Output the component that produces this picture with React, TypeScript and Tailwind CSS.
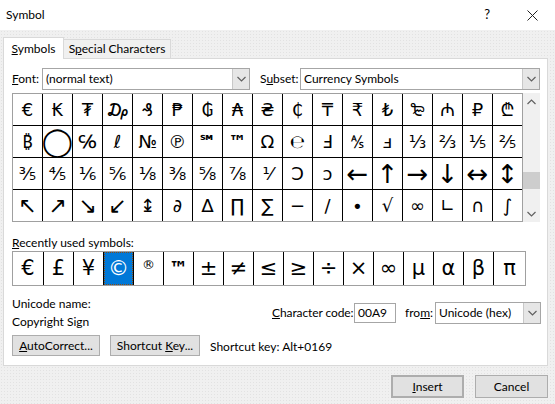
import React from 'react';

const gridRows: string[][] = [
  ['€', '₭', '₮', '₯', '₰', '₱', '₲', '₳', '₴', '₵', '₸', '₹', '₺', '₻', '₼', '₽', '₾'],
  ['₿', '◯', '℅', 'ℓ', '№', '℗', '℠', '™', 'Ω', '℮', 'Ⅎ', '⅍', 'ⅎ', '⅓', '⅔', '⅕', '⅖'],
  ['⅗', '⅘', '⅙', '⅚', '⅛', '⅜', '⅝', '⅞', '⅟', 'Ↄ', 'ↄ', '←', '↑', '→', '↓', '↔', '↕'],
  ['↖', '↗', '↘', '↙', '↨', '∂', '∆', '∏', '∑', '−', '∕', '∙', '√', '∞', '∟', '∩', '∫'],
];

const bigArrows = ['←', '↑', '→', '↓', '↔', '↕'];
const diagArrows = ['↖', '↗', '↘', '↙'];

const recent = ['€', '£', '¥', '©', '®', '™', '±', '≠', '≤', '≥', '÷', '×', '∞', 'µ', 'α', 'β', 'π'];

const Chevron = ({ up = false }: { up?: boolean }) => (
  <svg width="9" height="6" viewBox="0 0 9 6" className="block">
    <polyline
      points={up ? '0.5,5 4.5,1 8.5,5' : '0.5,1 4.5,5 8.5,1'}
      fill="none"
      stroke="#606060"
      strokeWidth="1.2"
    />
  </svg>
);

const Select = ({ value, className }: { value: string; className: string }) => (
  <div className={`flex h-[22px] items-stretch border border-[#a6a6a6] bg-white ${className}`}>
    <div className="flex flex-1 items-center whitespace-nowrap pl-[3px] leading-none">{value}</div>
    <div className="flex w-[17px] items-center justify-center border-l border-[#c8c8c8] bg-[#e6e6e6]">
      <Chevron />
    </div>
  </div>
);

const Btn = ({ children, className = '' }: { children: React.ReactNode; className?: string }) => (
  <div
    className={`flex items-center justify-center whitespace-nowrap bg-[#e1e1e1] border border-[#adadad] leading-none ${className}`}
  >
    {children}
  </div>
);

function cellSize(c: string) {
  if (c === '◯') return 'text-[28px]';
  if (bigArrows.includes(c)) return 'text-[26px]';
  if (diagArrows.includes(c)) return 'text-[22px]';
  if (c === '℠' || c === '™') return 'font-bold';
  return '';
}

export default function App() {
  return (
    <div className="flex h-[404px] w-[555px] flex-col bg-white text-[12px] text-black font-['Segoe_UI','Lato',sans-serif]">
      {/* title bar */}
      <div className="flex h-[30px] shrink-0 items-center pl-[6px]">
        <span className="flex-1 pb-[1px]">Symbol</span>
        <span className="mr-[37px] text-[13px]">?</span>
        <svg width="11" height="11" viewBox="0 0 11 11" className="mr-[17px]">
          <path d="M0.5 0.5 L10.5 10.5 M10.5 0.5 L0.5 10.5" stroke="#222" strokeWidth="1" />
        </svg>
      </div>

      <div className="flex flex-1 flex-col bg-[#f0f0f0] bg-[radial-gradient(#e2e2e2_0.7px,transparent_0.8px)] bg-[size:3px_3px] px-[3px] pt-[7px]">
        {/* tabs */}
        <div className="flex h-[21px] items-end">
          <div className="relative z-10 -mb-px flex h-[22px] w-[61px] items-center justify-center border border-b-0 border-[#d9d9d9] bg-white">
            <span>
              <span className="underline">S</span>ymbols
            </span>
          </div>
          <div className="flex h-[19px] w-[107px] items-center justify-center border border-l-0 border-b-0 border-[#d9d9d9] bg-[#f0f0f0]">
            <span>
              S<span className="underline">p</span>ecial Characters
            </span>
          </div>
        </div>

        {/* panel */}
        <div className="flex h-[308px] w-[545px] flex-col border border-[#d9d9d9] bg-white pl-[8px] pt-[9px]">
          <div className="flex h-[22px] items-center">
            <span className="w-[30px]">
              <span className="underline">F</span>ont:
            </span>
            <Select value="(normal text)" className="w-[208px]" />
            <span className="ml-[10px] w-[40px] whitespace-nowrap">
              S<span className="underline">u</span>bset:
            </span>
            <Select value="Currency Symbols" className="w-[240px]" />
          </div>

          {/* symbol grid + scrollbar */}
          <div className="mt-[3px] flex">
            <div className="grid grid-cols-[repeat(17,29px)] grid-rows-[repeat(4,31px)] gap-px border border-[#a0a0a0] bg-black font-['DejaVu_Sans','Noto_Sans',sans-serif] text-[18px]">
              {gridRows.flat().map((c, i) => (
                <div key={i} className="flex items-center justify-center overflow-hidden bg-white leading-none">
                  <span className={cellSize(c)}>{c}</span>
                </div>
              ))}
            </div>
            <div className="flex w-[17px] flex-col items-center bg-[#f0f0f0]">
              <div className="flex h-[17px] items-center justify-center">
                <Chevron up />
              </div>
              <div className="mt-[62px] h-[17px] w-full bg-[#cdcdcd]" />
              <div className="flex-1" />
              <div className="flex h-[17px] items-center justify-center">
                <Chevron />
              </div>
            </div>
          </div>

          <div className="mt-[13px] h-[16px] leading-[16px]">
            <span className="underline">R</span>ecently used symbols:
          </div>

          {/* recently used */}
          <div className="grid h-[35px] w-[514px] grid-cols-[30px_repeat(15,29px)_31px] gap-px border border-[#a0a0a0] bg-black font-['DejaVu_Sans','Noto_Sans',sans-serif] text-[21px]">
            {recent.map((c, i) => (
              <div
                key={i}
                className={`flex items-center justify-center leading-none ${
                  c === '©'
                    ? 'border border-dotted border-[#8a4a10] bg-[#0078d7] text-white'
                    : 'bg-white'
                }`}
              >
                <span
                  className={
                    c === '®' ? 'mb-[8px] text-[13px]' : c === '™' ? 'text-[19px] font-bold' : ''
                  }
                >
                  {c}
                </span>
              </div>
            ))}
          </div>

          {/* unicode name / character code */}
          <div className="mt-[9px] flex items-center">
            <div className="flex w-[260px] flex-col leading-[18px]">
              <span>Unicode name:</span>
              <span>Copyright Sign</span>
            </div>
            <span className="w-[82px] whitespace-nowrap tracking-[-0.1px]">
              <span className="underline">C</span>haracter code:
            </span>
            <div className="flex h-[20px] w-[42px] items-center border border-[#a6a6a6] bg-white pl-[3px] leading-none">
              00A9
            </div>
            <span className="ml-[9px] w-[30px] whitespace-nowrap">
              fro<span className="underline">m</span>:
            </span>
            <Select value="Unicode (hex)" className="w-[106px]" />
          </div>

          <div className="mt-[4px] flex h-[21px] items-center">
            <Btn className="h-[21px] w-[88px]">
              <span>
                <span className="underline">A</span>utoCorrect...
              </span>
            </Btn>
            <Btn className="ml-[10px] h-[21px] w-[90px]">
              <span>
                Shortcut <span className="underline">K</span>ey...
              </span>
            </Btn>
            <span className="ml-[10px] whitespace-nowrap pt-[3px]">Shortcut key: Alt+0169</span>
          </div>
        </div>

        {/* dialog buttons */}
        <div className="mt-[9px] flex justify-end gap-[11px] pr-[4px]">
          <Btn className="h-[23px] w-[73px] border-2 border-[#0078d7]">
            <span>
              <span className="underline">I</span>nsert
            </span>
          </Btn>
          <Btn className="h-[23px] w-[73px]">Cancel</Btn>
        </div>
      </div>
    </div>
  );
}
